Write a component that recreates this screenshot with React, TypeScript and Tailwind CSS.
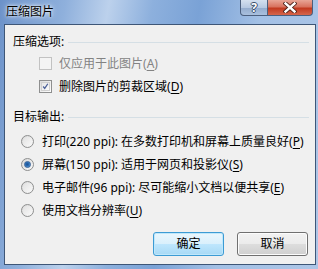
import React from "react";

const font = { fontFamily: '"Noto Sans", "Noto Sans CJK SC", sans-serif' };

const Key = ({ k }: { k: string }) => (
  <>
    (<span className="underline underline-offset-[2px]">{k}</span>)
  </>
);

const GroupHeader = ({ label }: { label: string }) => (
  <div className="h-[18px] flex items-center">
    <span className="text-[12px] text-black leading-none">{label}</span>
    <div className="flex-1 h-px bg-[#d5dfe5] ml-[4px] mr-[6px]" />
  </div>
);

const CheckBox = ({ checked, disabled }: { checked?: boolean; disabled?: boolean }) => (
  <div
    className={`w-[13px] h-[13px] border flex items-center justify-center ${
      disabled ? "border-[#c2c2c2] bg-[#f4f4f4]" : "border-[#8e8f8f] bg-gradient-to-br from-[#dcdcdc] to-[#ffffff]"
    }`}
  >
    {!disabled && (
      <div className="w-[9px] h-[9px] border border-[#d0d0d0] bg-gradient-to-br from-[#e6e6e6] to-[#fbfbfb] flex items-center justify-center">
        {checked && (
          <svg width="9" height="9" viewBox="0 0 9 9">
            <path d="M1.5 4.5 L3.5 7 L7.5 1" fill="none" stroke="#4a5f97" strokeWidth="1.6" />
          </svg>
        )}
      </div>
    )}
  </div>
);

const Radio = ({ checked }: { checked?: boolean }) => (
  <div className="w-[13px] h-[13px] rounded-full border border-[#8e8f8f] bg-gradient-to-br from-[#d8d8d8] to-[#fafafa] flex items-center justify-center">
    {checked ? (
      <div className="w-[7px] h-[7px] rounded-full bg-[radial-gradient(circle_at_45%_45%,#1e4f8f_0%,#2a6cb4_45%,#7cc0f0_100%)] border border-[#345f95]" />
    ) : (
      <div className="w-[9px] h-[9px] rounded-full bg-gradient-to-br from-[#e2e2e2] to-[#f8f8f8]" />
    )}
  </div>
);

const Button = ({ label, primary }: { label: string; primary?: boolean }) => (
  <div
    className={`w-[71px] h-[24px] rounded-[3px] border flex items-center justify-center text-[12px] text-black ${
      primary
        ? "border-[#3c9bd4] shadow-[inset_0_0_0_1px_#bfe7fb] bg-[linear-gradient(#eaf6fd_0%,#d9f0fc_50%,#bee6fd_51%,#a7d9f5_100%)]"
        : "border-[#707070] shadow-[inset_0_0_0_1px_#fcfcfc] bg-[linear-gradient(#f2f2f2_0%,#ebebeb_50%,#dddddd_51%,#cfcfcf_100%)]"
    }`}
  >
    {label}
  </div>
);

export default function App() {
  return (
    <div
      className="w-[318px] h-[269px] flex flex-col overflow-hidden bg-[linear-gradient(100deg,#6c92c9_0%,#8fb0dc_18%,#bcd1ec_30%,#8db0dd_42%,#7aa2d6_55%,#a3c0e5_72%,#adc6e7_100%)]"
      style={font}
    >
      <div className="h-[24px] shrink-0 flex items-start justify-between pl-[6px] pr-[5px]">
        <span className="mt-[4px] text-[12px] text-black leading-[16px] [text-shadow:0_0_6px_#ffffff,0_0_3px_#ffffff]">
          压缩图片
        </span>
        <div className="flex h-[16px]">
          <div className="w-[28px] h-full rounded-bl-[4px] border border-t-0 border-[#4b5f7e] bg-[linear-gradient(#d4e0ef_0%,#b7c9e2_50%,#93abcd_51%,#a9c0de_100%)] flex items-center justify-center">
            <span className="text-[12px] font-bold text-white leading-[14px] [text-shadow:1px_0_0_#3b4f6b,-1px_0_0_#3b4f6b,0_1px_0_#3b4f6b,0_-1px_0_#3b4f6b]">
              ?
            </span>
          </div>
          <div className="w-[45px] h-full rounded-br-[4px] border border-l-0 border-t-0 border-[#4b5f7e] bg-[linear-gradient(#e8a596_0%,#d8735f_45%,#c23a20_55%,#d5664c_100%)] flex items-center justify-center">
            <svg width="14" height="11" viewBox="0 0 14 11">
              <path d="M2.5 1.5 L11.5 9.5 M11.5 1.5 L2.5 9.5" stroke="#4a2018" strokeWidth="4.2" strokeLinecap="square" />
              <path d="M2.5 1.5 L11.5 9.5 M11.5 1.5 L2.5 9.5" stroke="#ffffff" strokeWidth="2.4" strokeLinecap="square" />
            </svg>
          </div>
        </div>
      </div>

      <div className="flex-1 ml-[4px] mr-[2px] mb-[4px] border border-[#3e5677] bg-[#f0f0f0] flex flex-col pl-[8px] pt-[8px] text-[12px] text-black">
        <GroupHeader label="压缩选项:" />
        <div className="mt-[1px] h-[23px] flex items-center pl-[26px] gap-[7px] text-[#838383]">
          <CheckBox disabled />
          <span>
            仅应用于此图片
            <Key k="A" />
          </span>
        </div>
        <div className="h-[23px] flex items-center pl-[26px] gap-[7px]">
          <CheckBox checked />
          <span>
            删除图片的剪裁区域
            <Key k="D" />
          </span>
        </div>

        <div className="mt-[10px]">
          <GroupHeader label="目标输出:" />
        </div>
        <div className="mt-[4px] flex flex-col">
          {[
            { t: "打印(220 ppi): 在多数打印机和屏幕上质量良好", k: "P" },
            { t: "屏幕(150 ppi): 适用于网页和投影仪", k: "S", c: true },
            { t: "电子邮件(96 ppi): 尽可能缩小文档以便共享", k: "E" },
            { t: "使用文档分辨率", k: "U" },
          ].map((r) => (
            <div key={r.k} className="h-[23px] flex items-center pl-[8px] gap-[8px] whitespace-nowrap">
              <Radio checked={r.c} />
              <span>
                {r.t}
                <Key k={r.k} />
              </span>
            </div>
          ))}
        </div>

        <div className="mt-[10px] flex justify-end gap-[13px] pr-[7px]">
          <Button label="确定" primary />
          <Button label="取消" />
        </div>
      </div>
    </div>
  );
}
